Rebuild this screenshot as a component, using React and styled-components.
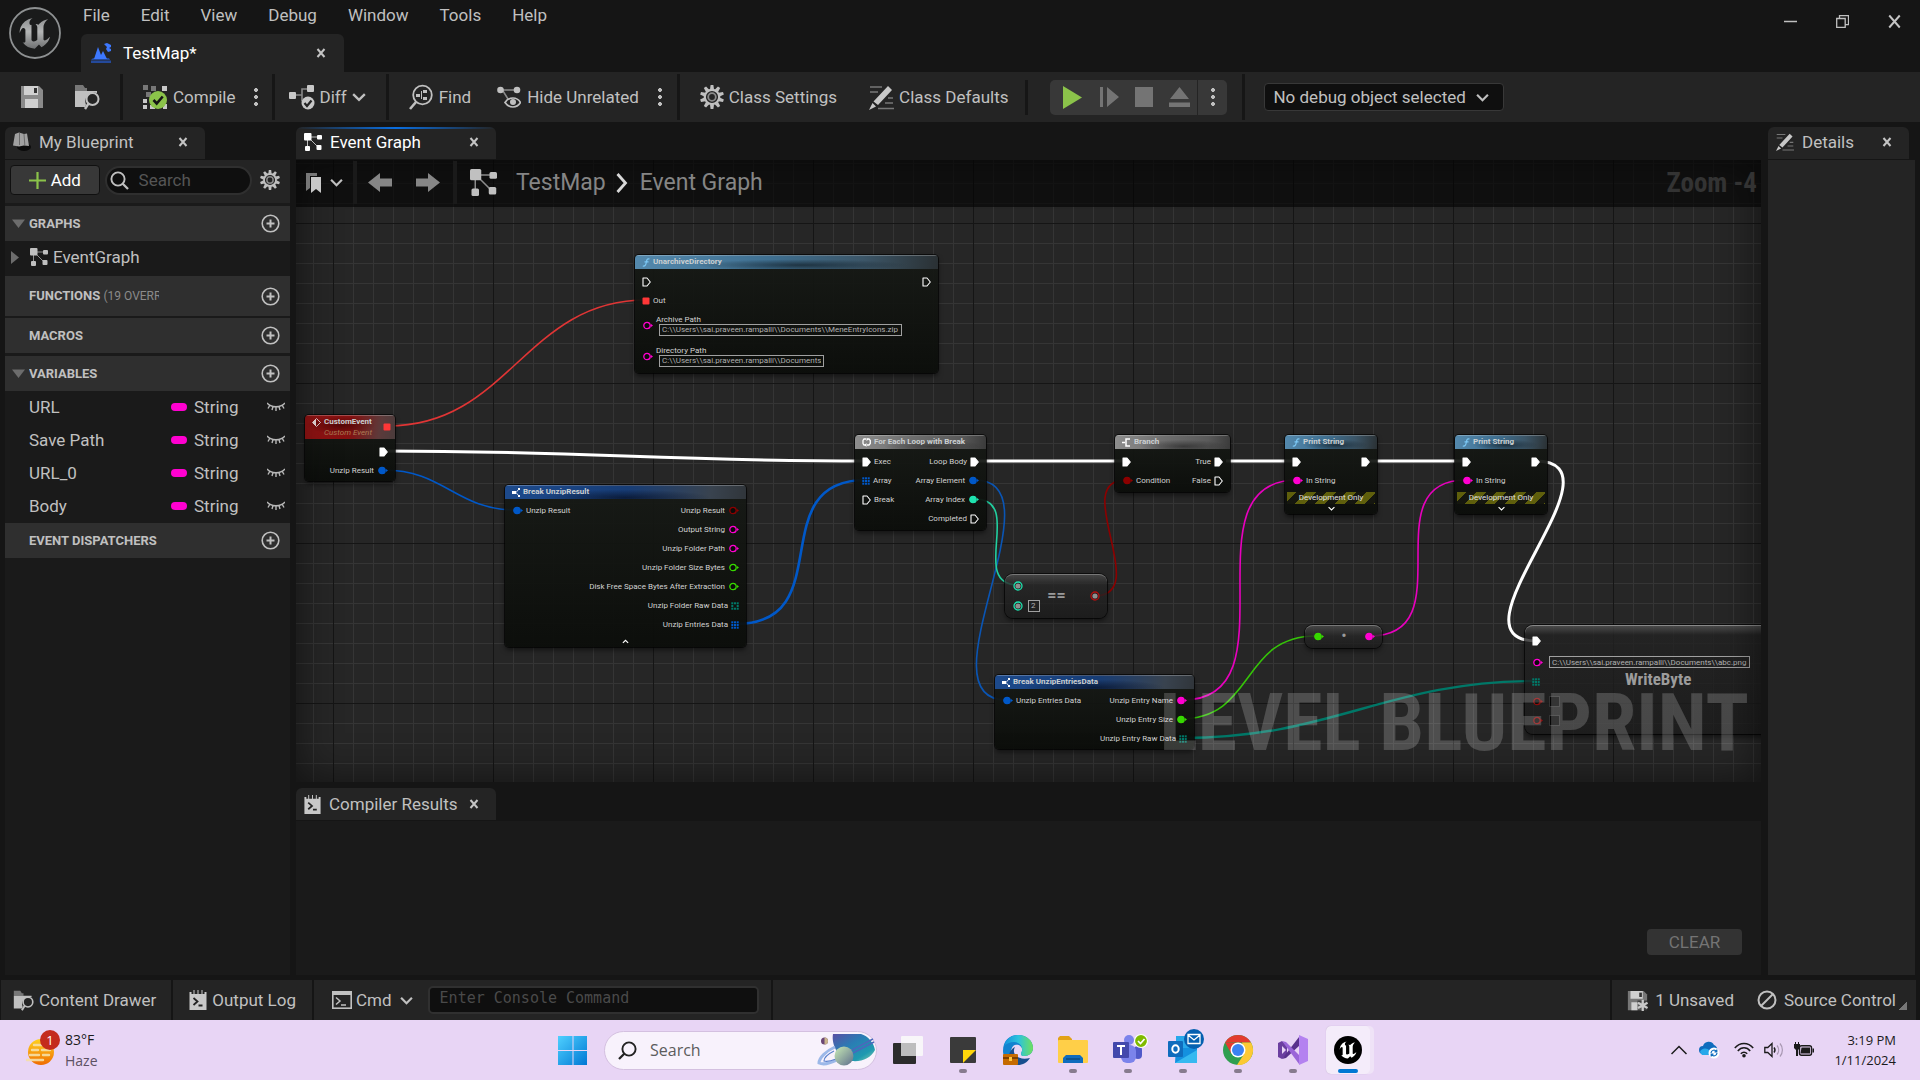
import React from 'react';
import styled, { createGlobalStyle, css } from 'styled-components';

const Global = createGlobalStyle`
  * { box-sizing: border-box; }
  body { margin: 0; background: #151515; overflow: hidden; }
  button, input, select { font: inherit; color: inherit; margin: 0; padding: 0; border: 0; background: none; }
  svg { display: block; flex: none; }
`;

const C = {
  base: '#151515', panel: '#242424', well: '#1a1a1a', head: '#2f2f2f',
  text: '#c0c0c0', input: '#0f0f0f', line: '#161616',
  red: '#ff3737', blue: '#0058c8', pink: '#ff00d0', green: '#37d800',
  teal: '#007868', mint: '#1fe3af', maroon: '#8c0000', white: '#ffffff',
};

/* ---------- icons ---------- */

const U_PATH = 'M19.13 13.729c-.206.997-1.126 3.557-4.06 4.942l-1.179-1.325-1.988 2a7.338 7.338 0 01-5.804-2.978 2.859 2.859 0 00.65.123c.326.006.678-.114.678-.66v-5.394a.89.89 0 00-1.116-.89c-.92.212-1.656 2.509-1.656 2.509a7.304 7.304 0 012.528-5.597 7.408 7.408 0 013.73-1.721c-1.006.573-1.57 1.507-1.57 2.29 0 1.262.76 1.109.984.923v7.28a1.157 1.157 0 00.148.256 1.075 1.075 0 00.88.445c.76 0 1.747-.868 1.747-.868V9.172c0-.6-.452-1.324-.905-1.572 0 0 .838-.149 1.484.346a5.537 5.537 0 01.387-.425c1.508-1.48 2.929-1.902 4.112-2.112 0 0-2.151 1.69-2.151 3.96 0 1.687.043 5.801.043 5.801.799.771 1.986-.342 3.059-1.441z';

const UnrealLogo = () => (
  <svg width="54" height="54" viewBox="0 0 54 54" aria-hidden="true">
    <defs>
      <linearGradient id="ulogo" x1="0" y1="0" x2="0" y2="1">
        <stop offset="0" stopColor="#8d8f90" /><stop offset=".45" stopColor="#b4b6b6" /><stop offset="1" stopColor="#6e7071" />
      </linearGradient>
    </defs>
    <circle cx="27" cy="27" r="25" fill="#1a1b1b" stroke="#8e9192" strokeWidth="1.8" />
    <path d={U_PATH} fill="url(#ulogo)" transform="translate(1.8 2) scale(2.1)" />
  </svg>
);

const Close = ({ size = 10, w = 2 }) => (
  <svg width={size} height={size} viewBox="0 0 10 10" aria-hidden="true">
    <path d="M1.5 1l7 8M8.5 1l-7 8" stroke="#c4c4c4" strokeWidth={w} />
  </svg>
);

const Chevron = ({ color = '#c0c0c0', size = 12, up }) => (
  <svg width={size} height={size} viewBox="0 0 12 12" aria-hidden="true">
    <path d={up ? 'M1.5 8.5L6 4l4.5 4.5' : 'M1 3.5l5 5 5-5'} fill="none" stroke={color} strokeWidth="2" />
  </svg>
);

const MapIcon = () => (
  <svg width="20" height="20" viewBox="0 0 20 20" aria-hidden="true">
    <path d="M0 17.5h20V20H0z" fill="#24499a" /><path d="M2 15h16l1 2H0z" fill="#24499a" />
    <path d="M3 16L7 4l3 8 2-4 4 8z" fill="#3d78ff" />
    <path d="M13 1l3-1 4 2v2l-2 1 2 1v2l-3 1-2-3 1-2z" fill="#3d78ff" />
  </svg>
);

const Floppy = ({ star }) => (
  <svg width={star ? 21 : 24} height={star ? 21 : 24} viewBox="0 0 24 24" aria-hidden="true">
    <path d="M1 1h18l4 4v18H1z" fill={star ? '#777' : '#8a8a8a'} />
    <path d="M4 1h14v9H4zM5 14h13v9H5z" fill="#d0d0d0" />
    <path d="M14 3h3v5h-3z" fill="#333" />
    {star && <g><path d="M12 12h12v12H12z" fill="#242424" opacity=".7" /><path d="M18 11v13M12.5 14.5l11 6M23.5 14.5l-11 6" stroke="#c8c8c8" strokeWidth="2.6" /></g>}
  </svg>
);

const Browse = ({ size = 26 }) => (
  <svg width={size} height={size} viewBox="0 0 26 26" aria-hidden="true">
    <path d="M1 1h8l2 3h2v3H1z" fill="#777" />
    <path d="M1 7h22v2a9 9 0 0 0-11 12l-1 2H1z" fill="#c0c0c0" />
    <circle cx="18.5" cy="15" r="6" fill="none" stroke="#c0c0c0" strokeWidth="2" />
    <path d="M14.5 19.5L11 25" stroke="#c0c0c0" strokeWidth="2.4" />
  </svg>
);

const CompileIcon = () => (
  <svg width="26" height="26" viewBox="0 0 26 26" aria-hidden="true">
    <path d="M1 1h5v5H1zM9 2h5v5H9zM4 8h5v5H4zM1 21h4v4H1z" fill="#777" />
    <path d="M20 2h5v5h-5zM13 8h5v5h-5zM1 15h4v4H1zM1 21h4v4H1zM8 21h5v4H8zM21 20h4v5h-4z" fill="#c8c8c8" />
    <circle cx="16" cy="16" r="9" fill="#8bc34a" />
    <path d="M11.5 16l3.2 3.5 6-7" fill="none" stroke="#151515" strokeWidth="2.6" />
  </svg>
);

const DiffIcon = () => (
  <svg width="26" height="26" viewBox="0 0 26 26" aria-hidden="true">
    <path d="M7 11h6V5h5M13 11v6" fill="none" stroke="#888" strokeWidth="1.6" />
    <rect x="0" y="8" width="7" height="7" rx="1" fill="#c8c8c8" /><rect x="18" y="1" width="7" height="7" rx="1" fill="#c8c8c8" />
    <circle cx="19" cy="19" r="6.5" fill="#c8c8c8" /><path d="M15.5 19l2.5 3 4.5-5.5" fill="none" stroke="#242424" strokeWidth="2.2" />
  </svg>
);

const FindIcon = () => (
  <svg width="24" height="26" viewBox="0 0 24 26" aria-hidden="true">
    <circle cx="13.5" cy="11" r="9.3" fill="none" stroke="#c0c0c0" strokeWidth="1.8" />
    <path d="M7 18l-6 7" stroke="#c0c0c0" strokeWidth="2.6" />
    <path d="M7 10h4v3H7zM14 6h4v3h-4zM14 13h4v3h-4zM12 7h1v8h-1z" fill="#c0c0c0" />
  </svg>
);

const HideIcon = () => (
  <svg width="24" height="24" viewBox="0 0 24 24" aria-hidden="true">
    <path d="M6 5h12M6 6l5 8" fill="none" stroke="#8a8a8a" strokeWidth="1.5" />
    <circle cx="3.5" cy="5" r="3.3" fill="#c0c0c0" /><circle cx="20" cy="5" r="3.3" fill="#c0c0c0" />
    <path d="M8 17.5c4-6 12-6 15.5 0-3.5 6-11.5 6-15.5 0z" fill="none" stroke="#c0c0c0" strokeWidth="1.7" /><circle cx="16" cy="17" r="3" fill="#c0c0c0" />
  </svg>
);

const TEETH = [0, 36, 72, 108, 144, 180, 216, 252, 288, 324];
const Gear = ({ size = 24 }) => (
  <svg width={size} height={size} viewBox="0 0 24 24" aria-hidden="true">
    {TEETH.map((a) => <path key={a} d="M10.6 0h2.8l.6 4.5h-4z" fill="#c0c0c0" transform={`rotate(${a} 12 12)`} />)}
    <circle cx="12" cy="12" r="7.2" fill="none" stroke="#c0c0c0" strokeWidth="2.2" />
    <circle cx="12" cy="12" r="3.8" fill="none" stroke="#8a8a8a" strokeWidth="1.8" />
  </svg>
);

const Pencil = ({ size = 25 }) => (
  <svg width={size} height={size} viewBox="0 0 25 25" aria-hidden="true">
    <path d="M1 2h12M1 7h8M19 13h5M16 18h8M9 23.5h16" stroke="#777" strokeWidth="1.5" />
    <path d="M19 1l4 4L9 20l-4.5-3.5zM3.5 18L7 21.500 0 25z" fill="#c8c8c8" />
  </svg>
);

const Graph = ({ size = 18, color = '#fff' }) => (
  <svg width={size} height={size} viewBox="0 0 18 18" aria-hidden="true">
    <path d="M4 4h10M3.5 4v11M5 5l9 9" stroke={color} strokeWidth="1" opacity=".7" />
    <rect x="0" y="0" width="7.5" height="7.5" rx="1" fill={color} /><rect x="13" y="2" width="5" height="4.5" rx="1" fill={color} />
    <rect x="1" y="13" width="5" height="5" rx="1" fill={color} /><rect x="12.5" y="12" width="5" height="5" rx="1" fill={color} />
  </svg>
);

const Book = () => (
  <svg width="18" height="20" viewBox="0 0 18 20" aria-hidden="true">
    <ellipse cx="11" cy="15" rx="7" ry="4" fill="#0b0b0b" />
    <path d="M2 2l4-1.5L11 2l3-.5L16 14l-5-.5-5 1-6-1z" fill="#a0a0a0" /><path d="M6.5 1v12M11 2l.8 11" stroke="#6a6a6a" strokeWidth="1" />
  </svg>
);

const Magnifier = ({ size = 19, color = '#c0c0c0', flip }) => (
  <svg width={size} height={size} viewBox="0 0 19 19" aria-hidden="true">
    <g transform={flip ? 'translate(19 0) scale(-1 1)' : undefined}>
      <circle cx="8" cy="8" r="6.6" fill="none" stroke={color} strokeWidth="1.9" /><path d="M12.5 12.5L18 18" stroke={color} strokeWidth="2.3" />
    </g>
  </svg>
);

const PlusCircle = () => (
  <svg width="19" height="19" viewBox="0 0 19 19" aria-hidden="true">
    <circle cx="9.5" cy="9.5" r="8.3" fill="none" stroke="#c0c0c0" strokeWidth="1.6" /><path d="M9.5 5.5v8M5.5 9.5h8" stroke="#c0c0c0" strokeWidth="2" />
  </svg>
);

const ClosedEye = () => (
  <svg width="18" height="10" viewBox="0 0 18 10" aria-hidden="true">
    <path d="M0 1c4 5 14 5 18 0M3 3L1 6.5M6 4.5L5 8M9 5v4M12 4.5L13 8M15 3l2 3.5" fill="none" stroke="#b8b8b8" strokeWidth="1.4" />
  </svg>
);

const Triangle = ({ right }) => (
  <svg width="13" height="13" viewBox="0 0 13 13" aria-hidden="true">
    <path d={right ? 'M2 0l8 6.5L2 13z' : 'M0 2.5h13L6.5 11z'} fill="#6c6c6c" />
  </svg>
);

const LogIcon = ({ size = 19 }) => (
  <svg width={size - 2} height={size} viewBox="0 0 17 20" aria-hidden="true">
    <path d="M0 2h2v2h2V0h1v4h3V0h1v4h3V0h1v4h2V2h2v18H0z" fill="#c8c8c8" />
    <path d="M4 8l4 3.5L4 15M9 15.5h4" fill="none" stroke="#222" strokeWidth="1.8" />
  </svg>
);

const CmdIcon = () => (
  <svg width="20" height="18" viewBox="0 0 20 18" aria-hidden="true">
    <rect x=".8" y=".8" width="18.4" height="16.4" fill="none" stroke="#c0c0c0" strokeWidth="1.6" /><path d="M0 0h20v4H0z" fill="#c0c0c0" />
    <path d="M4 6.5L8 10l-4 3.5M9 14h5" fill="none" stroke="#c0c0c0" strokeWidth="1.5" />
  </svg>
);

const NoEntry = () => (
  <svg width="20" height="20" viewBox="0 0 20 20" aria-hidden="true">
    <circle cx="10" cy="10" r="8.5" fill="none" stroke="#c0c0c0" strokeWidth="2" /><path d="M4 16L16 4" stroke="#c0c0c0" strokeWidth="2" />
  </svg>
);

const Arrow = ({ left }) => (
  <svg width="24" height="19" viewBox="0 0 24 19" aria-hidden="true">
    <path d="M12 0v5.5H0v8h12V19l12-9.5z" fill="#868686" transform={left ? 'translate(24 0) scale(-1 1)' : undefined} />
  </svg>
);

const Bookmark = () => (
  <svg width="16" height="20" viewBox="0 0 16 20" aria-hidden="true">
    <path d="M0 0h11v3H4v12l-4 3z" fill="#777" /><path d="M5 4h10v16l-5-4-5 4z" fill="#c8c8c8" />
  </svg>
);

/* ---------- shell ---------- */

const Page = styled.div`
  height: 100vh; display: flex; flex-direction: column; background: ${C.base};
  color: ${C.text}; font: 17px/20px Roboto, 'Liberation Sans', sans-serif;
`;
const TitleBar = styled.header`display: flex; height: 72px; flex: none;`;
const LogoBox = styled.div`width: 81px; padding: 6px 0 0 8px;`;
const TitleMain = styled.div`flex: 1; display: flex; flex-direction: column; justify-content: space-between;`;
const Menu = styled.nav`display: flex; gap: 31px; padding: 5px 2px 0;`;
const PlainButton = styled.button`display: flex; align-items: center; justify-content: center; gap: ${(p) => p.$gap || 0}px; white-space: nowrap;`;
const WindowButtons = styled.div`display: flex; align-items: flex-start; padding: 8px 0 0;`;
const WindowButton = styled(PlainButton)`width: 52px; height: 26px;`;

const Tab = styled.div`
  display: flex; align-items: center; gap: 8px; width: ${(p) => p.$w}px; height: ${(p) => p.$h || 32}px;
  padding: 0 17px 2px 8px; border-radius: 6px 6px 0 0; background: ${C.panel}; color: ${(p) => (p.$on ? '#fff' : C.text)};
  white-space: nowrap; flex: none;
  ${(p) => p.$accent && css`background: linear-gradient(90deg, ${C.panel}, #0a6ee0 50%, ${C.panel}) top / 100% 2px no-repeat, ${C.panel};`}
  & > button { margin-left: auto; }
`;
const DocTab = styled(Tab)`padding: 0 18px 0 10px; gap: 12px;`;
const LowTab = styled(Tab)`padding-bottom: 0;`;

const Toolbar = styled.div`display: flex; align-items: center; height: 50px; background: ${C.panel}; flex: none;`;
const Group = styled.div`display: flex; align-items: center; gap: ${(p) => p.$gap || 0}px; padding: 0 ${(p) => p.$r || 0}px 0 ${(p) => p.$l || 0}px;`;
const Sep = styled.div`width: 3px; height: ${(p) => (p.$short ? 35 : 46)}px; background: ${C.line};`;
const Dots = styled.span`
  display: block; width: 10px; height: 19px;
  background: radial-gradient(circle at 5px 2px, #c0c0c0 1.6px, transparent 2.2px), radial-gradient(circle at 5px 9px, #c0c0c0 1.6px, transparent 2.2px), radial-gradient(circle at 5px 16px, #c0c0c0 1.6px, transparent 2.2px);
`;
const PlayGroup = styled.div`
  display: flex; align-items: center; height: 35px; border-radius: 5px; background: #383838; overflow: hidden;
  & > button { width: 35px; height: 35px; }
  & > button:first-child { width: 41px; padding-left: 3px; }
  & > button:nth-child(4) { width: 36px; }
  & > button:last-child { width: 30px; border-left: 1px solid #242424; }
`;
const SelectWrap = styled.label`
  display: grid; align-items: center; width: 240px; height: 28px; border: 1px solid #383838; border-radius: 4px; background: ${C.input};
  & > * { grid-area: 1 / 1; }
  & > svg { justify-self: end; margin-right: 14px; pointer-events: none; }
`;
const Select = styled.select`appearance: none; height: 26px; padding: 0 0 0 8px; width: 100%; outline: 0;`;

const Work = styled.main`
  flex: 1; min-height: 0; display: grid; grid-template-columns: 285px minmax(0, 1fr) 147px; column-gap: 6px; padding: 5px;
`;
const Column = styled.section`display: flex; flex-direction: column; min-height: 0; min-width: 0; padding-right: ${(p) => p.$r || 0}px;`;
const PanelBody = styled.div`flex: 1; margin-top: 1px; background: ${(p) => (p.$well ? C.well : C.panel)};`;

/* ---------- left panel ---------- */

const BpTools = styled.div`display: flex; align-items: center; gap: 5px; height: 43px; margin-bottom: 3px; padding: 0 10px 3px 5px; background: ${C.panel};`;
const AddButton = styled(PlainButton)`width: 90px; height: 30px; border-radius: 4px; background: #383838; border: 1px solid #101010; color: #fff;`;
const SearchBox = styled.label`
  display: flex; align-items: center; gap: 10px; width: 148px; height: 29px; margin-right: 3px; padding: 0 3px; border-radius: 15px; background: ${C.input}; border: 2px solid #2f2f2f;
  input { width: 90px; outline: 0; } input::placeholder { color: #555; }
`;
const Section = styled.div`
  display: flex; align-items: center; height: ${(p) => p.$h || 35}px; margin-bottom: ${(p) => p.$mb || 0}px;
  padding: 0 10px 0 7px; background: ${C.head};
  & > button { margin-left: auto; }
`;
const SectionTitle = styled.h2`
  margin: 0; width: 130px; overflow: hidden; white-space: nowrap; font-size: 13px; font-weight: 700; line-height: 16px;
  span { font-size: 12px; font-weight: 400; color: #8a8a8a; }
`;
const Twist = styled.span`width: 17px; flex: none;`;
const TreeRow = styled.div`display: flex; align-items: center; height: 35px; padding: 0 0 3px 4px; & > svg + svg { margin: 0 5px 0 8px; }`;
const VarRow = styled.li`
  display: grid; grid-template-columns: 142px 23px 1fr 18px; align-items: center; height: 33px; padding: 0 5px 2px 24px;
`;
const VarList = styled.ul`list-style: none; margin: 0; padding: 0;`;
const Pill = styled.i`width: 16px; height: 8px; border-radius: 4px; background: ${C.pink};`;

/* ---------- graph ---------- */

const Canvas = styled.div`
  position: relative; flex: 1; min-height: 0; margin-top: 1px; overflow: hidden; background-color: #262626;
  background-image:
    linear-gradient(90deg, #151515 1px, transparent 1px), linear-gradient(#151515 1px, transparent 1px),
    linear-gradient(90deg, #353535 1px, transparent 1px), linear-gradient(#353535 1px, transparent 1px);
  background-size: 160px 160px, 160px 160px, 20px 20px, 20px 20px;
  background-position: 37px 63px, 37px 63px, 17px 3px, 17px 3px;
`;
const Vignette = styled.div`position: absolute; inset: 0; box-shadow: inset 0 0 40px rgba(0,0,0,.55); pointer-events: none;`;
const Crumbs = styled.div`
  position: relative; z-index: 3; display: flex; align-items: center; height: 47px; background: rgba(5,5,5,.66);
  color: #858585; font-size: 23px; line-height: 28px; padding: 0 4px 2px 10px;
`;
const CrumbSep = styled.i`width: 4px; height: 43px; background: #1a1a1a; margin: 0 ${(p) => p.$r}px 0 ${(p) => p.$l}px;`;
const CrumbText = styled.span`margin: 0 ${(p) => p.$r || 0}px 0 ${(p) => p.$l || 0}px;`;
const ZoomLabel = styled.span`margin-left: auto; font: 700 27px/32px 'Roboto Condensed', Roboto, sans-serif; color: #333;`;
const Watermark = styled.div`
  position: absolute; right: 12px; bottom: 13px; font: 700 80px/92px 'Roboto Condensed', Roboto, sans-serif; color: rgba(255,255,255,.19);
  white-space: nowrap; pointer-events: none;
`;
const Wires = styled.svg`position: absolute; inset: 0; width: 100%; height: 100%;`;

const HEADS = {
  func: 'radial-gradient(ellipse at 55% 70%, rgba(20,34,44,.75), transparent 45%), linear-gradient(100deg, #5489ad, #3f6f90 45%, #3c5668 75%, #2a3033)',
  struct: 'radial-gradient(ellipse at 50% 90%, rgba(6,14,34,.7), transparent 50%), linear-gradient(100deg, #1d4a8c, #173d77 50%, #39434f 85%, #30353a)',
  event: 'radial-gradient(ellipse at 40% 40%, rgba(50,0,0,.6), transparent 45%), linear-gradient(100deg, #961414, #841010 50%, #5d3a3a 82%, #4a3c3c)',
  flow: 'radial-gradient(ellipse at 60% 80%, rgba(40,40,40,.7), transparent 45%), linear-gradient(100deg, #8e8e8e, #707070 40%, #5a5a5a 80%, #3a3a3a)',
};
const NodeBox = styled.article`
  position: absolute; left: ${(p) => p.$x}px; top: ${(p) => p.$y}px; width: ${(p) => p.$w}px; height: ${(p) => p.$h}px;
  border-radius: 4px; background: linear-gradient(rgba(22,25,21,.93), rgba(11,13,10,.95)); overflow: hidden;
  box-shadow: 0 0 0 1px rgba(0,0,0,.65), 0 3px 5px rgba(0,0,0,.5);
  color: #d2d2d2; font-size: 8px; line-height: 10px;
`;
const NodeHead = styled.header`
  display: flex; align-items: flex-start; gap: 3px; height: ${(p) => p.$h || 14}px; padding: 1px 4px 0 7px; background: ${(p) => HEADS[p.$kind]};
  border-top: 1px solid rgba(255,255,255,.25); color: #ccd0d2; font-weight: 700;
  & > svg { margin-top: 1px; } em { display: block; font-weight: 400; color: #ab7d55; padding-top: 1px; }
  & > svg:nth-of-type(2) { margin: 6px 0 0 auto; }
`;
const NodeTitle = styled.h3`margin: 0; font-size: 8px; line-height: 10px; white-space: nowrap;`;
const NodeBody = styled.div`padding: ${(p) => (p.$struct ? 2 : 3)}px 7px 0;`;
const Row = styled.div`display: flex; justify-content: space-between; align-items: center; height: 19px; white-space: nowrap;`;
const Side = styled.span`display: flex; align-items: center; gap: 3px;`;
const PathRow = styled.label`display: flex; align-items: center; gap: 3px; height: 31px;`;
const PathCol = styled.span`display: flex; flex-direction: column; height: 22px; line-height: 9px;`;
const PathInput = styled.input`
  width: ${(p) => p.$w}px; height: 12px; margin-left: ${(p) => p.$l || 0}px; padding: 0 2px; border: 1px solid #a0a0a0; color: #b0b0b0; font-size: 8px; line-height: 10px; outline: 0;
`;
const DevOnly = styled.div`
  height: 12px; margin: 2px -5px 0; text-align: center; color: #e0e0e0; line-height: 11px;
  background: repeating-linear-gradient(135deg, #5f5f0c 0 7px, #15160f 7px 14px);
`;
const Fold = styled.div`display: flex; justify-content: center; padding-top: ${(p) => p.$t}px;`;

const Compact = styled(NodeBox)`
  border-radius: 8px; display: grid; grid-template-columns: 1fr auto 1fr; align-items: center; padding: 0 7px 2px 8px; border-top: 1px solid #777;
  background: linear-gradient(rgba(75,75,75,.8), rgba(38,38,38,.8) 10px, rgba(26,26,26,.8));
  color: #9a9a9a;
  & > svg:last-child { justify-self: end; }
`;
const CompactPins = styled.div`display: flex; flex-direction: column; gap: 8px;`;
const CompactPinRow = styled.label`display: flex; align-items: center; gap: 5px; height: 12px;`;
const CompactName = styled.strong`font-size: 16px; line-height: 18px; font-weight: ${(p) => (p.$light ? 400 : 700)};`;
const WriteNode = styled(NodeBox)`
  border-radius: 8px 0 0 8px; border-top: 1px solid #888; background: linear-gradient(rgba(80,80,80,.85), rgba(34,34,34,.8) 9px, rgba(26,26,26,.75));
  display: grid; grid-template-rows: 30px 12px 27px 12px 26px; padding: 0 7px;
`;
const WriteRow = styled.div`display: flex; align-items: center; gap: 6px;`;
const WriteTitle = styled.h3`margin: 0; padding: 0 0 5px 79px; font: 700 17px/19px 'Roboto Condensed', Roboto, sans-serif; color: #9c9c9c;`;
const Check = styled.input`appearance: none; width: 11px; height: 11px; border: 1px solid #333; background: #060606;`;

const Pin = ({ t = 'dot', c = C.white, on }) => {
  if (t === 'exec') return (
    <svg width="9" height="10" viewBox="0 0 9 10" aria-hidden="true"><path d="M1 1h4l3.3 4L5 9H1z" fill={on ? '#fff' : 'none'} stroke="#fff" strokeWidth="1.1" strokeLinejoin="round" /></svg>
  );
  if (t === 'array') return (
    <svg width="8" height="8" viewBox="0 0 8 8" aria-hidden="true">
      {[0, 1, 2].flatMap((i) => [0, 1, 2].map((j) => ((!on && i === 1 && j === 1) ? null : <rect key={`${i}${j}`} x={i * 2.7 + 0.3} y={j * 2.7 + 0.3} width="2" height="2" fill={c} />)))}
    </svg>
  );
  if (t === 'square') return <svg width="8" height="8" viewBox="0 0 8 8" aria-hidden="true"><rect x=".5" y=".5" width="7" height="7" rx="1" fill={c} /></svg>;
  if (t === 'ring') return <svg width="10" height="10" viewBox="0 0 10 10" aria-hidden="true"><circle cx="5" cy="5" r="4" fill="#1a1a1a" stroke={c} strokeWidth="1.3" /><circle cx="5" cy="5" r="2.6" fill="#8f8f8f" /></svg>;
  return (
    <svg width="11" height="9" viewBox="0 0 11 9" aria-hidden="true">
      <circle cx="5" cy="4.5" r="3.2" fill={on ? c : '#0b0c0a'} stroke={c} strokeWidth="1.3" /><path d="M9 3l2 1.5L9 6z" fill={c} />
    </svg>
  );
};

const HeadIcon = ({ kind }) => {
  if (kind === 'func') return <svg width="8" height="9" viewBox="0 0 8 9" aria-hidden="true"><path d="M7.500 1C5 .2 4.800 2 4.300 4.500S3 8.600.800 8M2.500 3.800h4" fill="none" stroke="#7cc8f5" strokeWidth="1.2" /></svg>;
  if (kind === 'struct') return <svg width="8" height="9" viewBox="0 0 8 9" aria-hidden="true"><path d="M0 3h4v3H0zM6 0h2v2H6zM6 7h2v2H6z" fill="#fff" /><path d="M6.500 1.500L4 4.500l2.500 3" fill="none" stroke="#fff" strokeWidth=".8" /></svg>;
  if (kind === 'event') return <svg width="9" height="9" viewBox="0 0 9 9" aria-hidden="true"><path d="M4.500.5l4 4-4 4-4-4z" fill="none" stroke="#e0d0d0" /><path d="M4 1v7L.5 4.500z" fill="#fff" opacity=".85" /><path d="M4 3l2.500 1.500L4 6z" fill="#6a0c0c" /></svg>;
  if (kind === 'loop') return <svg width="9" height="9" viewBox="0 0 9 9" aria-hidden="true"><path d="M4 1H2L1 2.500v3L2 7h2M5 1h2l1.300 1.500v3L7 7H5" fill="none" stroke="#fff" strokeWidth="1.3" /><path d="M4.500 5v4L2.500 7zM4.500 0v3l2-1.500z" fill="#fff" /></svg>;
  return <svg width="9" height="9" viewBox="0 0 9 9" aria-hidden="true"><path d="M0 4.500h3M8 1H4v7h4" fill="none" stroke="#fff" strokeWidth="1.5" /></svg>;
};

const Port = ({ p, side }) => {
  if (!p) return <span />;
  const pin = <Pin t={p.t} c={p.c} on={p.on} />;
  return <Side>{side === 'in' ? <>{pin}{p.n}</> : <>{p.n}{pin}</>}</Side>;
};

const Node = ({ x, y, w, h, kind, icon, title, rows, children }) => (
  <NodeBox $x={x} $y={y} $w={w} $h={h}>
    <NodeHead $kind={kind}><HeadIcon kind={icon || kind} /><NodeTitle>{title}</NodeTitle></NodeHead>
    <NodeBody $struct={kind === 'struct'}>
      {rows.map((r, i) => <Row key={i}><Port p={r[0]} side="in" /><Port p={r[1]} side="out" /></Row>)}
      {children}
    </NodeBody>
  </NodeBox>
);

const exec = (n, on) => ({ t: 'exec', n, on });
const dot = (n, c, on) => ({ n, c, on });
const arr = (n, c, on) => ({ t: 'array', n, c, on });

const WIRES = [
  { a: [92, 266], b: [350, 140], t: 121, c: '#e03535', w: 1.6 },
  { a: [88, 291], b: [570, 301], t: 200, c: '#fff', w: 3 },
  { a: [88, 310], b: [220, 350], t: 60, c: C.blue, w: 1.6 },
  { a: [440, 464], b: [570, 320], t: 105, c: C.blue, w: 2.6 },
  { a: [679, 320], b: [710, 540], t: 88, c: '#0a55b4', w: 1.6 },
  { a: [679, 339], b: [722, 425], t: 50, c: '#21cfa0', w: 1.6 },
  { a: [678, 301], b: [828, 301], t: 60, c: '#fff', w: 3 },
  { a: [798, 436], b: [830, 320], t: 60, t2: 58, c: C.maroon, w: 1.6 },
  { a: [930, 301], b: [1000, 301], t: 30, c: '#fff', w: 3 },
  { a: [1070, 301], b: [1170, 301], t: 30, c: '#fff', w: 3 },
  { a: [887, 540], b: [1001, 320], t: 115, c: '#e800be', w: 1.6 },
  { a: [884, 559], b: [1020, 476], t: 76, c: '#35c408', w: 1.6 },
  { a: [887, 578], b: [1240, 521], t: 150, c: C.teal, w: 2.4 },
  { a: [1074, 476], b: [1170, 320], t: 96, c: '#e800be', w: 1.6 },
  { a: [1239, 301], b: [1241, 481], t: 97, c: '#fff', w: 3 },
];

const EventGraph = () => (
  <Canvas>
    <Wires aria-hidden="true">
      {WIRES.map(({ a, b, t, t2, c, w }, i) => (
        <path key={i} d={`M${a[0]} ${a[1]}C${a[0] + t} ${a[1]} ${b[0] - (t2 || t)} ${b[1]} ${b[0]} ${b[1]}`} fill="none" stroke={c} strokeWidth={w} />
      ))}
    </Wires>
    <Crumbs>
      <PlainButton $gap={8} aria-label="Bookmarks"><Bookmark /><Chevron size={13} /></PlainButton>
      <CrumbSep $l={10} $r={11} />
      <PlainButton aria-label="Back"><Arrow left /></PlainButton>
      <CrumbText $l={24}><PlainButton aria-label="Forward"><Arrow /></PlainButton></CrumbText>
      <CrumbSep $l={13} $r={13} />
      <Graph size={27} color="#c0c0c0" />
      <CrumbText $l={19} $r={10}>TestMap</CrumbText>
      <svg width="12" height="22" viewBox="0 0 12 22" aria-hidden="true"><path d="M1.5 2l8 9-8 9" fill="none" stroke="#d8d8d8" strokeWidth="2.8" /></svg>
      <CrumbText $l={12}>Event Graph</CrumbText>
      <ZoomLabel>Zoom -4</ZoomLabel>
    </Crumbs>

    <Node x={339} y={95} w={303} h={118} kind="func" title="UnarchiveDirectory"
      rows={[[exec(''), exec('')], [{ t: 'square', n: 'Out', c: C.red }, null]]}>
      <PathRow><Pin c={C.pink} /><PathCol>Archive Path<PathInput $w={243} $l={3} defaultValue={'C:\\\\Users\\\\sai.praveen.rampalli\\\\Documents\\\\MeneEntryIcons.zip'} /></PathCol></PathRow>
      <PathRow><Pin c={C.pink} /><PathCol>Directory Path<PathInput $w={165} $l={3} defaultValue={'C:\\\\Users\\\\sai.praveen.rampalli\\\\Documents'} /></PathCol></PathRow>
    </Node>

    <NodeBox $x={9} $y={255} $w={90} $h={66}>
      <NodeHead $kind="event" $h={24}><HeadIcon kind="event" /><NodeTitle>CustomEvent<em>Custom Event</em></NodeTitle><Pin t="square" c={C.red} /></NodeHead>
      <NodeBody>
        <Row><span /><Port p={exec('', true)} side="out" /></Row>
        <Row><span /><Port p={dot('Unzip Result', C.blue, true)} side="out" /></Row>
      </NodeBody>
    </NodeBox>

    <Node x={209} y={325} w={241} h={162} kind="struct" title="Break UnzipResult" rows={[
      [dot('Unzip Result', C.blue, true), dot('Unzip Result', C.maroon)],
      [null, dot('Output String', C.pink)], [null, dot('Unzip Folder Path', C.pink)],
      [null, dot('Unzip Folder Size Bytes', C.green)], [null, dot('Disk Free Space Bytes After Extraction', C.green)],
      [null, arr('Unzip Folder Raw Data', C.teal)], [null, arr('Unzip Entries Data', C.blue, true)],
    ]}><Fold $t={4}><Chevron up size={7} color="#fff" /></Fold></Node>

    <Node x={559} y={275} w={131} h={95} kind="flow" icon="loop" title="For Each Loop with Break" rows={[
      [exec('Exec', true), exec('Loop Body', true)], [arr('Array', C.blue, true), dot('Array Element', C.blue, true)],
      [exec('Break'), dot('Array Index', C.mint, true)], [null, exec('Completed')],
    ]} />

    <Node x={819} y={275} w={115} h={57} kind="flow" icon="branch" title="Branch" rows={[
      [exec('', true), exec('True', true)], [dot('Condition', C.maroon, true), exec('False')],
    ]} />

    {[989, 1159].map((x) => (
      <Node key={x} x={x} y={275} w={92} h={79} kind="func" title="Print String" rows={[[exec('', true), exec('', true)], [dot('In String', C.pink, true), null]]}>
        <DevOnly>Development Only</DevOnly><Fold $t={1}><Chevron size={7} color="#fff" /></Fold>
      </Node>
    ))}

    <Compact $x={709} $y={414} $w={102} $h={44}>
      <CompactPins>
        <CompactPinRow as="span"><Pin t="ring" c={C.mint} /></CompactPinRow>
        <CompactPinRow><Pin t="ring" c={C.mint} /><PathInput $w={12} defaultValue="2" aria-label="Compare value" /></CompactPinRow>
      </CompactPins>
      <CompactName>==</CompactName><Pin t="ring" c="#b01010" />
    </Compact>

    <Compact $x={1009} $y={465} $w={77} $h={23}>
      <Pin c={C.green} on /><CompactName $light>•</CompactName><Pin c={C.pink} on />
    </Compact>

    <Node x={699} y={515} w={199} h={74} kind="struct" title="Break UnzipEntriesData" rows={[
      [dot('Unzip Entries Data', C.blue, true), dot('Unzip Entry Name', C.pink, true)],
      [null, dot('Unzip Entry Size', C.green, true)], [null, arr('Unzip Entry Raw Data', C.teal, true)],
    ]} />

    <WriteNode $x={1229} $y={465} $w={300} $h={109}>
      <WriteRow><Pin t="exec" on /></WriteRow>
      <WriteRow><Pin c={C.pink} /><PathInput $w={201} aria-label="File path" defaultValue={'C:\\\\Users\\\\sai.praveen.rampalli\\\\Documents\\\\abc.png'} /></WriteRow>
      <WriteRow><Pin t="array" c={C.teal} on /><WriteTitle>WriteByte</WriteTitle></WriteRow>
      <WriteRow><Pin c="#8c0c0c" /><Check type="checkbox" aria-label="Option one" /></WriteRow>
      <WriteRow><Pin c="#8c0c0c" /><Check type="checkbox" aria-label="Option two" /></WriteRow>
    </WriteNode>
    <Vignette />
    <Watermark>LEVEL BLUEPRINT</Watermark>
  </Canvas>
);

/* ---------- compiler results and status bar ---------- */

const Results = styled.section`display: flex; flex-direction: column; height: 187px; flex: none; margin-top: 6px;`;
const ResultBody = styled(PanelBody)`display: flex; justify-content: flex-end; align-items: flex-end; padding: 0 19px 20px;`;
const ClearButton = styled(PlainButton)`width: 95px; height: 26px; border-radius: 4px; background: #333; color: #747474;`;

const StatusBar = styled.footer`display: flex; align-items: stretch; height: 40px; gap: 2px; padding: 0 4px 0 1px; flex: none;`;
const StatusCell = styled.div`
  display: flex; align-items: center; gap: ${(p) => p.$gap || 0}px; background: ${C.panel}; padding: 0 ${(p) => p.$r}px 0 ${(p) => p.$l}px; white-space: nowrap;
  ${(p) => p.$fill && 'flex: 1;'}
`;
const Console = styled.input`
  width: 331px; height: 28px; padding: 0 8px 4px 10px; border: 2px solid #303030; border-radius: 5px; background: ${C.input}; font: 15px/20px 'DejaVu Sans Mono', monospace; outline: 0;
  &::placeholder { color: #4a4a4a; opacity: 1; }
`;
const Grip = styled.i`align-self: flex-end; width: 8px; height: 8px; margin: 0 0 10px 3px; background: linear-gradient(135deg, transparent 50%, #777 50%);`;

/* ---------- desktop task bar ---------- */

const Taskbar = styled.div`
  display: grid; grid-template-columns: 1fr auto 1fr; align-items: center; height: 60px; flex: none; background: #e8d5f5; color: #1b1b1b;
  font-family: 'Open Sans', 'Noto Sans', sans-serif; font-size: 14px;
`;
const Weather = styled.button`
  display: flex; align-items: center; gap: 5px; padding-left: 25px; text-align: left; line-height: 21px;
  small { display: block; font-size: 14px; color: #5c5163; }
`;
const Apps = styled.div`display: flex; align-items: center;`;
const AppButton = styled.button`
  width: 55px; height: 60px; display: flex; flex-direction: column; align-items: center; justify-content: flex-start; padding-top: 11px;
  &::after { content: ''; width: 8px; height: 4px; border-radius: 2px; margin-top: 2px; background: ${(p) => (p.$run ? '#877b8e' : 'transparent')}; }
`;
const ActiveApp = styled(AppButton)`
  padding-top: 6px;
  &::after { width: 20px; height: 4px; margin-top: -5px; background: #0078d4; }
`;
const ActiveTile = styled.span`display: grid; place-items: center; width: 44px; height: 48px; border-radius: 5px; background: #f4ecfa; box-shadow: 4px 0 0 #efe3f7, 0 0 1px #b9a6c6;`;
const TaskSearch = styled.label`
  display: flex; align-items: center; gap: 13px; width: 273px; height: 39px; margin: 0 3px 0 4px; padding: 0 0 0 13px; border-radius: 20px; background: #f8f2fc; border: 1px solid #d4c0e0;
  input { flex: 1; min-width: 0; font-size: 16px; outline: 0; } input::placeholder { color: #5c5c5c; opacity: 1; }
`;
const Tray = styled.div`display: flex; align-items: center; justify-content: flex-end; padding-right: 24px;`;
const TrayIcons = styled.div`display: flex; align-items: center; gap: 10px; margin-right: 20px; & > svg:first-child { margin-right: 2px; } & > svg:nth-child(2) { margin-right: 4px; }`;
const Clock = styled.time`text-align: right; font-size: 13px; line-height: 20px; white-space: nowrap;`;

const I = ({ children }) => <svg width="32" height="36" viewBox="0 0 32 36" aria-hidden="true" overflow="visible">{children}</svg>;

const WeatherIcon = () => (
  <svg width="35" height="40" viewBox="0 0 35 40" aria-hidden="true">
    <defs><linearGradient id="sun" x1="0" y1="0" x2="0" y2="1"><stop offset="0" stopColor="#ffd21f" /><stop offset="1" stopColor="#ef6c00" /></linearGradient></defs>
    <circle cx="16" cy="22" r="13" fill="url(#sun)" />
    <path d="M9 15h10M7 20h6M17 20h8M5 25h9M18 25h6M2 30h16" stroke="#f6e0a6" strokeWidth="2.4" strokeLinecap="round" opacity=".9" />
    <circle cx="25" cy="10" r="10" fill="#c42b1c" />
    <text x="25" y="15" textAnchor="middle" fontSize="13" fill="#fff" fontFamily="Open Sans, sans-serif">1</text>
  </svg>
);

const Doodle = () => (
  <svg width="59" height="34" viewBox="0 0 59 34" aria-hidden="true">
    <defs>
      <linearGradient id="pl" x1="0" y1="0" x2="1" y2="1"><stop offset="0" stopColor="#5a50a4" /><stop offset=".4" stopColor="#2a7cb4" /><stop offset=".75" stopColor="#1f9ab0" /><stop offset="1" stopColor="#8ccfae" /></linearGradient>
      <linearGradient id="mn" x1="0" y1="0" x2="1" y2="1"><stop offset="0" stopColor="#c9ecb6" /><stop offset="1" stopColor="#5e6e8c" /></linearGradient>
    </defs>
    <path d="M16 1h28c7 2 13 9 14 16-4 8-13 12-23 11C22 27 14 12 16 1z" fill="url(#pl)" />
    <path d="M18 14C9 18 2 25 2 30c4 2 12 0 18-3" fill="none" stroke="#9cb8e8" strokeWidth="3" />
    <path d="M56 6L33 18M57 9L36 20" fill="none" stroke="#4a68bc" strokeWidth="1.5" /><path d="M17 18C11 21 7 25 7 28c3 1 7 0 12-2" fill="none" stroke="#5a80cc" strokeWidth="1.2" />
    <circle cx="27" cy="23" r="9.5" fill="url(#mn)" /><circle cx="7.5" cy="8" r="3.5" fill="#6b4675" /><path d="M7.500 4.500a3.500 3.500 0 0 1 0 7z" fill="#c9b48c" />
  </svg>
);

const Windows = () => (
  <I><defs><linearGradient id="win" x1="0" y1="0" x2="1" y2="1"><stop offset="0" stopColor="#4fd0ff" /><stop offset="1" stopColor="#0078d4" /></linearGradient></defs>
    <path d="M1 5h14.500v14H1zM16.500 5H30v14H16.500zM1 20h14.500v14H1zM16.500 20H30v14H16.500z" fill="url(#win)" /></I>
);
const TaskView = () => <I><rect x="1" y="12" width="23" height="21" rx="1" fill="#2c2c2c" /><rect x="9" y="5" width="22" height="20" rx="1" fill="#f8f8f8" opacity=".92" /><rect x="9" y="12" width="15" height="13" fill="#bdbdbd" /></I>;
const Sticky = () => <I><rect x="3" y="6" width="26" height="26" rx="1" fill="#3a3a3a" /><path d="M16 19h13L16 32z" fill="#ffd60a" /></I>;
const Edge = () => (
  <I><defs><linearGradient id="ed" x1="0" y1="0" x2="1" y2="0"><stop offset="0" stopColor="#1592dc" /><stop offset=".5" stopColor="#2cc3dd" /><stop offset="1" stopColor="#6fe05c" /></linearGradient></defs>
    <path d="M1 20C1 10 7 4 16 4c9 0 15 6 15 13 0 5-4 8-9 8-4 0-3-3-2-5 1-4-3-7-7-6-5 1-5 12-1 16C5 32 1 26 1 20z" fill="#1282cf" />
    <path d="M2 15C4 8 9 4 16 4c9 0 15 6 15 13 0 5-4 8-9 8-4 0-3-3-2-5 1-5-3-9-8-9-4 0-8 2-10 4z" fill="url(#ed)" />
    <path d="M13 16c-4 7 3 14 15 11-4 7-13 9-19 5-4-5-2-13 4-16z" fill="#174f8e" />
    <rect x="1" y="23" width="15" height="11" rx="1" fill="#c56a00" /><path d="M1 27h15" stroke="#7d3f00" strokeWidth="2" /><rect x="7" y="26" width="3" height="4" fill="#ffc83d" /></I>
);
const Folder = () => <I><path d="M1 7l2-2h9l3 3v5H1z" fill="#e2a217" /><rect x="1" y="9" width="30" height="23" rx="1" fill="#ffcf48" /><path d="M6 32v-5l3-3h14l3 3v5z" fill="#0f6cbd" /><path d="M9 28h14" stroke="#0a4b83" strokeWidth="1.5" /></I>;
const Teams = () => (
  <I><circle cx="17" cy="9" r="5" fill="#7b83eb" /><rect x="22" y="15" width="8" height="13" rx="4" fill="#5059c9" /><rect x="9" y="14" width="15" height="18" rx="6" fill="#7b83eb" />
    <rect x="1" y="11" width="16" height="16" rx="1" fill="#4349ac" /><path d="M5 15h8M9 15v9" stroke="#fff" strokeWidth="2" />
    <circle cx="29" cy="10" r="6.5" fill="#7fba00" stroke="#fff" strokeWidth="1.2" /><path d="M26 10l2.500 2.500L32.500 8" fill="none" stroke="#fff" strokeWidth="1.7" /></I>
);
const Outlook = () => (
  <I><rect x="9" y="5" width="20" height="24" fill="#28a8ea" /><path d="M9 17h21v15H8z" fill="#1490df" /><path d="M8 32l22-13v13z" fill="#36b9f0" /><rect x="1" y="10" width="15" height="16" rx="1" fill="#0f6cbd" />
    <ellipse cx="8.5" cy="18" rx="3.2" ry="3.7" fill="none" stroke="#fff" strokeWidth="2" /><circle cx="27" cy="8" r="10" fill="#0560b0" />
    <path d="M21 3.500h12v9H21zM21 4l6 5 6-5" fill="none" stroke="#fff" strokeWidth="1.3" /></I>
);
const Chrome = () => (
  <I><circle cx="16" cy="19" r="15" fill="#2f9e4f" /><path d="M3 11.500A15 15 0 0 1 29 11.500H16z" fill="#e33b2e" /><path d="M3 11.500L9.500 23 16 12z" fill="#e33b2e" />
    <path d="M29 11.500A15 15 0 0 1 15 34l7-11-2-11.500z" fill="#fcc934" /><circle cx="16" cy="19" r="7.5" fill="#fff" /><circle cx="16" cy="19" r="6" fill="#3b82f0" /></I>
);
const VStudio = () => (
  <I><path d="M1 12l4-2 5 5v8l-5 5-4-2z" fill="#6b3fa0" /><path d="M5 15v8l4-4z" fill="#e8d5f5" /><path d="M5 28L22 6l1 8L9 27z" fill="#59318c" />
    <path d="M5 10l4 1 14 14-1 8z" fill="#9a66d8" /><path d="M22 4l9 4v22l-9 4z" fill="#b482f0" /></I>
);

const APPS = [['Task View', TaskView, 0], ['Sticky Notes', Sticky, 1], ['Edge', Edge, 0], ['File Explorer', Folder, 1], ['Teams', Teams, 1], ['Outlook', Outlook, 1], ['Chrome', Chrome, 1], ['Visual Studio', VStudio, 1]];

const VARS = ['URL', 'Save Path', 'URL_0', 'Body'];
const CloseTab = () => <PlainButton aria-label="Close tab"><Close /></PlainButton>;
const AddTo = ({ what }) => <PlainButton aria-label={`Add ${what}`}><PlusCircle /></PlainButton>;

export default function App() {
  return (
    <>
      <Global />
      <Page>
        <TitleBar>
          <LogoBox><UnrealLogo /></LogoBox>
          <TitleMain>
            <Menu>{['File', 'Edit', 'View', 'Debug', 'Window', 'Tools', 'Help'].map((m) => <PlainButton key={m}>{m}</PlainButton>)}</Menu>
            <DocTab $w={263} $h={38} $on><MapIcon />TestMap*<CloseTab /></DocTab>
          </TitleMain>
          <WindowButtons>
            <WindowButton aria-label="Minimize"><svg width="13" height="13" viewBox="0 0 13 13"><path d="M0 6.5h13" stroke="#c0c0c0" strokeWidth="1.5" /></svg></WindowButton>
            <WindowButton aria-label="Restore"><svg width="13" height="13" viewBox="0 0 13 13"><path d="M.7 3.5h8.5v9H.7zM3.5 3V.7h9v9H9.5" fill="none" stroke="#c0c0c0" strokeWidth="1.3" /></svg></WindowButton>
            <WindowButton aria-label="Close"><Close size={15} w={1.3} /></WindowButton>
          </WindowButtons>
        </TitleBar>

        <Toolbar>
          <Group $l={20} $r={20} $gap={30}>
            <PlainButton aria-label="Save"><Floppy /></PlainButton><PlainButton aria-label="Browse"><Browse /></PlainButton>
          </Group>
          <Sep />
          <Group $l={19} $r={11} $gap={15}><PlainButton $gap={5}><CompileIcon />Compile</PlainButton><PlainButton aria-label="Compile options"><Dots /></PlainButton></Group>
          <Sep />
          <Group $l={14} $r={20}><PlainButton $gap={5}><DiffIcon />Diff<Chevron size={14} /></PlainButton></Group>
          <Sep />
          <Group $l={20} $r={12} $gap={16}>
            <Group $gap={26}><PlainButton $gap={6}><FindIcon />Find</PlainButton><PlainButton $gap={6}><HideIcon />Hide Unrelated</PlainButton></Group>
            <PlainButton aria-label="Hide options"><Dots /></PlainButton>
          </Group>
          <Sep />
          <Group $l={20} $r={17} $gap={32}><PlainButton $gap={5}><Gear />Class Settings</PlainButton><PlainButton $gap={5}><Pencil />Class Defaults</PlainButton></Group>
          <Sep $short />
          <Group $l={22} $r={15}>
            <PlayGroup>
              <PlainButton aria-label="Play"><svg width="21" height="23" viewBox="0 0 21 23"><path d="M1 0l19 11.5L1 23z" fill="#8bc34a" /></svg></PlainButton>
              <PlainButton aria-label="Step"><svg width="20" height="20" viewBox="0 0 20 20"><path d="M1 0h3v20H1zM8 0l12 10L8 20z" fill="#747474" /></svg></PlainButton>
              <PlainButton aria-label="Stop"><svg width="18" height="20" viewBox="0 0 18 20"><path d="M0 0h18v20H0z" fill="#747474" /></svg></PlainButton>
              <PlainButton aria-label="Eject"><svg width="21" height="20" viewBox="0 0 21 20"><path d="M10.5 0L20 12H1zM0 15.5h21V20H0z" fill="#747474" /></svg></PlainButton>
              <PlainButton aria-label="Play options"><Dots /></PlainButton>
            </PlayGroup>
          </Group>
          <Sep />
          <Group $l={19}>
            <SelectWrap><Select aria-label="Debug object" defaultValue="none"><option value="none">No debug object selected</option></Select><Chevron size={13} /></SelectWrap>
          </Group>
        </Toolbar>

        <Work>
          <Column>
            <Tab $w={200}><Book />My Blueprint<CloseTab /></Tab>
            <PanelBody $well>
              <BpTools>
                <AddButton $gap={5}><svg width="17" height="17" viewBox="0 0 17 17" aria-hidden="true"><path d="M8.5 0v17M0 8.5h17" stroke="#8bc34a" strokeWidth="2.2" /></svg>Add</AddButton>
                <SearchBox><Magnifier /><input placeholder="Search" aria-label="Search blueprint" /></SearchBox>
                <PlainButton aria-label="View options"><Gear size={20} /></PlainButton>
              </BpTools>
              <Section><Twist><Triangle /></Twist><SectionTitle>GRAPHS</SectionTitle><AddTo what="graph" /></Section>
              <TreeRow><Triangle right /><Graph color="#c0c0c0" />EventGraph</TreeRow>
              <Section $h={40} $mb={2}><Twist /><SectionTitle>FUNCTIONS <span>(19 OVERRIDABLE)</span></SectionTitle><AddTo what="function" /></Section>
              <Section $mb={3}><Twist /><SectionTitle>MACROS</SectionTitle><AddTo what="macro" /></Section>
              <Section><Twist><Triangle /></Twist><SectionTitle>VARIABLES</SectionTitle><AddTo what="variable" /></Section>
              <VarList>{VARS.map((v) => <VarRow key={v}><span>{v}</span><Pill /><span>String</span><ClosedEye /></VarRow>)}</VarList>
              <Section><Twist /><SectionTitle>EVENT DISPATCHERS</SectionTitle><AddTo what="dispatcher" /></Section>
            </PanelBody>
          </Column>

          <Column $r={1}>
            <Tab $w={200} $on $accent><Graph />Event Graph<CloseTab /></Tab>
            <EventGraph />
            <Results>
              <LowTab $w={200}><LogIcon />Compiler Results<CloseTab /></LowTab>
              <ResultBody $well><ClearButton>CLEAR</ClearButton></ResultBody>
            </Results>
          </Column>

          <Column>
            <Tab $w={141}><Pencil size={18} />Details<CloseTab /></Tab>
            <PanelBody />
          </Column>
        </Work>

        <StatusBar>
          <StatusCell $l={12} $r={15}><PlainButton $gap={5}><Browse size={21} />Content Drawer</PlainButton></StatusCell>
          <StatusCell $l={16} $r={16}><PlainButton $gap={5}><LogIcon size={20} />Output Log</PlainButton></StatusCell>
          <StatusCell $l={18} $r={12} $gap={15}>
            <PlainButton $gap={4}><CmdIcon />Cmd<span /><Chevron size={13} /></PlainButton>
            <Console placeholder="Enter Console Command" aria-label="Console command" />
          </StatusCell>
          <StatusCell $fill />
          <StatusCell $l={15} $r={9}>
            <PlainButton $gap={7}><Floppy star />1 Unsaved</PlainButton>
            <Group $l={23}><PlainButton $gap={7}><NoEntry />Source Control</PlainButton></Group><Grip />
          </StatusCell>
        </StatusBar>

        <Taskbar>
          <Weather><WeatherIcon /><span>83°F<small>Haze</small></span></Weather>
          <Apps>
            <AppButton aria-label="Start"><Windows /></AppButton>
            <TaskSearch><Magnifier color="#222" flip /><input placeholder="Search" aria-label="Search the desktop" /><Doodle /></TaskSearch>
            {APPS.map(([n, Icon, run]) => <AppButton key={n} aria-label={n} $run={!!run}><Icon /></AppButton>)}
            <ActiveApp aria-label="Unreal Editor">
              <ActiveTile><svg width="28" height="28" viewBox="0 0 24 24" aria-hidden="true"><circle cx="12" cy="12" r="12" fill="#000" /><path d={U_PATH} fill="#fff" /></svg></ActiveTile>
            </ActiveApp>
          </Apps>
          <Tray>
            <TrayIcons>
              <svg width="16" height="10" viewBox="0 0 16 10"><path d="M.5 9L8 1.5 15.5 9" fill="none" stroke="#1b1b1b" strokeWidth="1.5" /></svg>
              <svg width="21" height="18" viewBox="0 0 21 18"><path d="M4 13a4 4 0 0 1 0-8 6 6 0 0 1 11-1c3 1 4 4 3 9z" fill="#0f6cbd" /><path d="M1 11c1-4 7-5 10-1l2 4H3z" fill="#28a8ea" /><circle cx="15" cy="12" r="5.5" fill="#fff" /><path d="M12 12a3 3 0 0 1 5.5-1.5M18 12a3 3 0 0 1-5.5 1.5M17.800 8.500v2.300h-2.300M12.200 15.500v-2.300h2.300" fill="none" stroke="#0f6cbd" strokeWidth="1.2" /></svg>
              <svg width="20" height="16" viewBox="0 0 20 16"><path d="M.8 6c5-6 13.400-6 18.400 0M3.800 9c3.500-4.200 8.900-4.200 12.400 0M6.800 11.800c2-2.200 4.400-2.200 6.400 0" fill="none" stroke="#1b1b1b" strokeWidth="1.5" /><circle cx="10" cy="13.8" r="1.8" fill="#1b1b1b" /></svg>
              <svg width="20" height="16" viewBox="0 0 20 16"><path d="M.8 5.500h3L8 1.500v13l-4.200-4h-3z" fill="none" stroke="#1b1b1b" strokeWidth="1.3" /><path d="M10 5.500a4 4 0 0 1 0 5" fill="none" stroke="#1b1b1b" strokeWidth="1.4" /><path d="M13 3.500a7 7 0 0 1 0 9M16 1.500a10 10 0 0 1 0 13" fill="none" stroke="#a898b2" strokeWidth="1.2" /></svg>
              <svg width="20" height="16" viewBox="0 0 20 16"><path d="M0 2h1V0h1v2h2V0h1v2h1v4L4 8v6H2V8L0 6z" fill="#1b1b1b" /><rect x="5.5" y="3.7" width="12" height="9.5" rx="2" fill="none" stroke="#1b1b1b" strokeWidth="1.4" /><path d="M7.500 5.500h8.500v6H6.500zM18.500 6.500h1.500v4h-1.500z" fill="#1b1b1b" /></svg>
            </TrayIcons>
            <Clock>3:19 PM<br />1/11/2024</Clock>
          </Tray>
        </Taskbar>
      </Page>
    </>
  );
}
